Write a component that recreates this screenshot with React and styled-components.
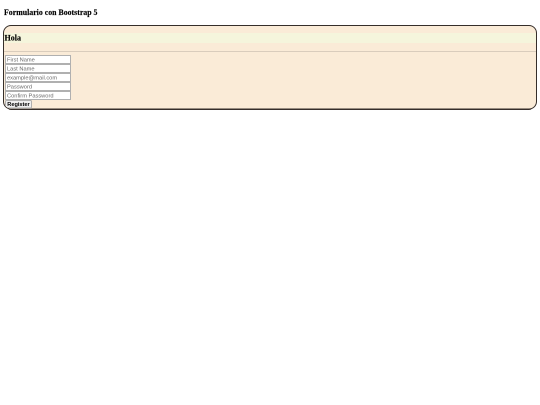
import styled, { createGlobalStyle } from "styled-components";

const GlobalStyle = createGlobalStyle`
    html, body {
        margin: 0;
        background: #ffffff;
        overflow: hidden;
    }

    body {
        font-family: "Liberation Serif", serif;
        color: #000000;
    }
`;

const fields = [
    { type: "text", placeholder: "First Name" },
    { type: "text", placeholder: "Last Name" },
    { type: "email", placeholder: "example@mail.com" },
    { type: "password", placeholder: "Password" },
    { type: "password", placeholder: "Confirm Password" },
];

export default function App() {
    return (
        <>
            <GlobalStyle />
            <Page>
                <Title>Formulario con Bootstrap 5</Title>
                <Card>
                    <CardHeader>
                        <Heading>Hola</Heading>
                    </CardHeader>
                    <Form onSubmit={(e) => e.preventDefault()}>
                        {fields.map((field) => (
                            <Field key={field.placeholder} type={field.type} placeholder={field.placeholder} />
                        ))}
                        <Submit type="submit">Register</Submit>
                    </Form>
                </Card>
            </Page>
        </>
    );
}

const Page = styled.main`
    width: 1080px;
    box-sizing: border-box;
    padding: 16px 6px 0 6px;
    transform: scale(0.5);
    transform-origin: 0 0;
    will-change: transform;
`;

const Title = styled.h1`
    margin: 0 0 16px 2px;
    font-size: 15.7px;
    line-height: 18px;
    font-weight: 700;
    -webkit-text-stroke: 0.3px #000000;
`;

const Card = styled.section`
    width: 1068px;
    box-sizing: border-box;
    background: #faebd7;
    border: 2px solid #352e2a;
    border-radius: 16px;
    overflow: hidden;
`;

const CardHeader = styled.header`
    padding: 14px 0 17px 0;
    border-bottom: 1px solid #b8aea2;
`;

const Heading = styled.h2`
    margin: 0;
    padding-left: 1px;
    background: #f5f5dc;
    font-size: 16px;
    line-height: 20px;
    font-weight: 700;
    -webkit-text-stroke: 0.3px #000000;
`;

const Form = styled.form`
    display: flex;
    flex-direction: column;
    align-items: flex-start;
    padding-top: 6px;
    padding-left: 2px;
`;

const Field = styled.input`
    width: 132px;
    height: 18px;
    box-sizing: border-box;
    margin: 0;
    padding: 0 2px;
    background: #ffffff;
    border: 2px solid #b0b0b0;
    font-family: "Liberation Sans", sans-serif;
    font-size: 11.4px;
    outline: none;

    &::placeholder {
        color: #6a6a6a;
    }
`;

const Submit = styled.button`
    width: 54px;
    height: 17px;
    box-sizing: border-box;
    margin: 0;
    padding: 0;
    background: #efefef;
    border: 2px solid #b0b0b0;
    border-radius: 3px;
    font-family: "Liberation Sans", sans-serif;
    font-size: 11.2px;
    font-weight: 600;
    line-height: 13px;
    color: #000000;
`;
